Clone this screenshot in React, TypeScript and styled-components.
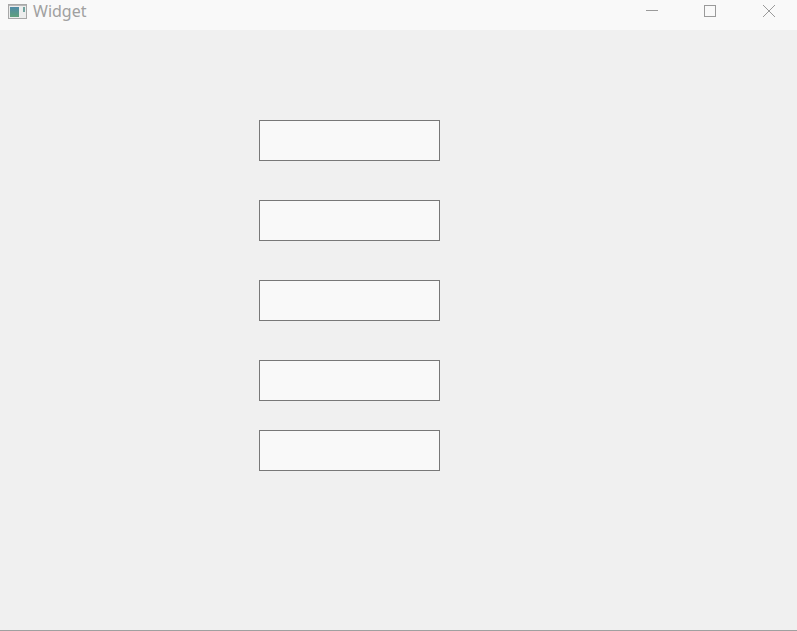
import React from "react";
import styled, { createGlobalStyle } from "styled-components";

const GlobalStyle = createGlobalStyle`
  html, body {
    margin: 0;
    padding: 0;
    background: #f0f0f0;
  }
`;

const FIELDS = [
  { id: "a", gap: 39 },
  { id: "b", gap: 39 },
  { id: "c", gap: 39 },
  { id: "d", gap: 29 },
  { id: "e", gap: 0 },
];

const App: React.FC = () => {
  return (
    <>
      <GlobalStyle />
      <Window>
        <TitleBar>
          <TitleLeft>
            <svg width="19" height="15" viewBox="0 0 19 15">
              <defs>
                <linearGradient id="pane" x1="0" y1="0" x2="0" y2="1">
                  <stop offset="0" stopColor="#4f8aa6" />
                  <stop offset="1" stopColor="#5fa07c" />
                </linearGradient>
              </defs>
              <rect x="0.5" y="0.5" width="18" height="14" fill="#eceded" stroke="#a8a8a8" />
              <rect x="1" y="1" width="17" height="1" fill="#b8b8b8" />
              <rect x="2" y="3" width="9" height="10" fill="url(#pane)" />
              <rect x="15" y="3" width="2" height="5" fill="#6fa39e" />
            </svg>
            <TitleText>Widget</TitleText>
          </TitleLeft>
          <Controls>
            <ControlButton>
              <svg width="14" height="14" viewBox="0 0 14 14">
                <path d="M1 6.5H13" stroke="#9a9a9a" strokeWidth="1" fill="none" />
              </svg>
            </ControlButton>
            <ControlButton $trailing={1}>
              <svg width="14" height="14" viewBox="0 0 14 14">
                <rect x="1.5" y="1.5" width="11" height="11" stroke="#9a9a9a" strokeWidth="1" fill="none" />
              </svg>
            </ControlButton>
            <ControlButton>
              <svg width="14" height="14" viewBox="0 0 14 14">
                <path d="M1 1L13 13M13 1L1 13" stroke="#9a9a9a" strokeWidth="1" fill="none" />
              </svg>
            </ControlButton>
          </Controls>
        </TitleBar>
        <Content>
          {FIELDS.map((f) => (
            <LineEdit key={f.id} $gap={f.gap} />
          ))}
        </Content>
      </Window>
    </>
  );
};

export default App;

const Window = styled.div`
  display: flex;
  flex-direction: column;
  width: 797px;
  height: 631px;
  box-sizing: border-box;
  border-bottom: 1px solid #a0a0a0;
  background: #f0f0f0;
  overflow: hidden;
`;

const TitleBar = styled.div`
  display: flex;
  justify-content: space-between;
  align-items: flex-start;
  height: 30px;
  flex-shrink: 0;
  background: #f9f9f9;
`;

const TitleLeft = styled.div`
  display: flex;
  align-items: center;
  gap: 6px;
  height: 22px;
  padding-left: 8px;
`;

const TitleText = styled.span`
  font-family: "Noto Sans", "Open Sans", sans-serif;
  font-size: 16px;
  line-height: 22px;
  color: #a0a0a0;
`;

const Controls = styled.div`
  display: flex;
  gap: 44px;
  padding: 4px 21px 0 0;
`;

const ControlButton = styled.div<{ $trailing?: number }>`
  display: flex;
  width: 14px;
  height: 14px;
  margin-right: ${(p) => p.$trailing ?? 0}px;
`;

const Content = styled.div`
  display: flex;
  flex-direction: column;
  align-items: flex-start;
  padding: 90px 0 0 259px;
`;

const LineEdit = styled.div<{ $gap: number }>`
  width: 181px;
  height: 41px;
  box-sizing: border-box;
  margin-bottom: ${(p) => p.$gap}px;
  border: 1px solid #787878;
  background: #f9f9f9;
`;
